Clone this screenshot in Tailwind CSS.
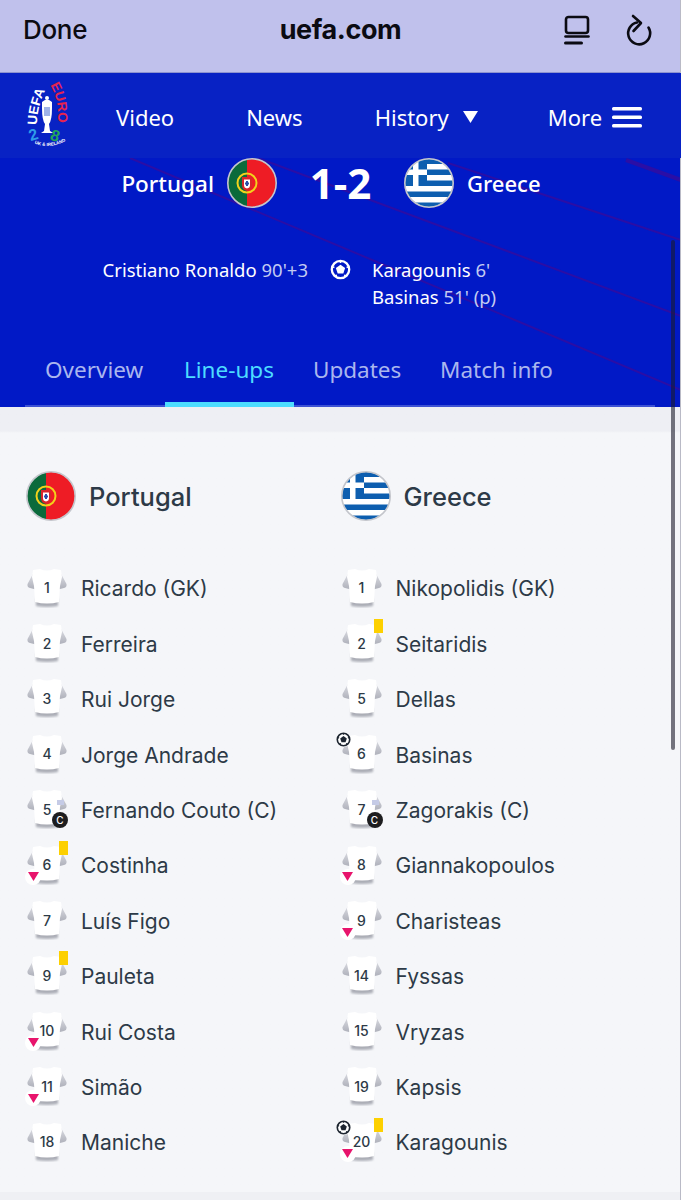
<!DOCTYPE html>
<html lang="en">

<head>
    <meta charset="UTF-8">
    <meta name="viewport" content="width=device-width, initial-scale=1.0">
    <title>Portugal 1-2 Greece - Line-ups</title>
    <script src="https://cdn.jsdelivr.net/npm/@tailwindcss/browser@4"></script>
</head>

<body class="bg-[#f5f6f9] font-['Noto_Sans',sans-serif]">
    <svg class="absolute w-0 h-0">
        <defs>
            <filter id="soft" x="-30%" y="-30%" width="160%" height="160%"><feGaussianBlur stdDeviation="1.200"/></filter>
            <linearGradient id="sleeve" x1="0" y1="0" x2="0" y2="1">
                <stop offset="0" stop-color="#e6e7ec"/>
                <stop offset="1" stop-color="#aeb0ba"/>
            </linearGradient>
            <symbol id="shirt" viewBox="0 0 40 40">
                <path d="M9 30 H31 L31 38 Q20 40 9 38 Z" fill="#9a9ca6" opacity="0.8" filter="url(#soft)"/>
                <path d="M8 2 L0.500 16 Q0 19.500 3 20 L9 21.500 Z" fill="url(#sleeve)"/>
                <path d="M32 2 L39.500 16 Q40 19.500 37 20 L31 21.500 Z" fill="url(#sleeve)"/>
                <path d="M6 2 L13 1 Q20 4 27 1 L34 2 L35 9 L33 18 L32 34 Q20 37 8 34 L7 18 L5 9 Z" fill="#ffffff"/>
            </symbol>
            <symbol id="ball" viewBox="0 0 20 20">
                <circle cx="10" cy="10" r="8.300" fill="none" stroke="currentColor" stroke-width="2.200"/>
                <path d="M10 5.400 L14.400 8.600 L12.700 13.700 L7.300 13.700 L5.600 8.600 Z" fill="currentColor"/>
                <path d="M10 2 V3.800 M17.500 7.500 L15.800 8.100 M14.800 16.400 L13.700 15 M5.200 16.400 L6.300 15 M2.500 7.500 L4.200 8.100" stroke="currentColor" stroke-width="1.500"/>
            </symbol>
            <symbol id="pt" viewBox="0 0 50 50">
                <clipPath id="ptclip"><circle cx="25" cy="25" r="24"/></clipPath>
                <g clip-path="url(#ptclip)">
                    <rect width="20" height="50" fill="#0b6a3b"/>
                    <rect x="20" width="30" height="50" fill="#ee1c25"/>
                </g>
                <circle cx="20" cy="25" r="9.500" fill="none" stroke="#f2d21b" stroke-width="2"/>
                <path d="M15 19 H25 V27 Q25 32 20 33 Q15 32 15 27 Z" fill="#d9262b"/>
                <path d="M17 21.500 H23 V27 Q23 30 20 30.500 Q17 30 17 27 Z" fill="#ffffff"/>
                <rect x="19" y="23" width="2" height="5" fill="#2a4fa8"/>
                <rect x="18" y="24.500" width="4" height="2" fill="#2a4fa8"/>
                <circle cx="25" cy="25" r="24.200" fill="none" stroke="#c4c6cc" stroke-width="1.600"/>
            </symbol>
            <symbol id="gr" viewBox="0 0 50 50">
                <clipPath id="grclip"><circle cx="25" cy="25" r="24"/></clipPath>
                <g clip-path="url(#grclip)">
                    <rect width="50" height="50" fill="#ffffff"/>
                    <rect x="0" y="0.500" width="50" height="5.500" fill="#0d5eaf"/>
                    <rect x="0" y="11.500" width="50" height="5.500" fill="#0d5eaf"/>
                    <rect x="0" y="22.500" width="50" height="5.500" fill="#0d5eaf"/>
                    <rect x="0" y="33.500" width="50" height="5.500" fill="#0d5eaf"/>
                    <rect x="0" y="44.500" width="50" height="5.500" fill="#0d5eaf"/>
                    <rect x="0" y="0" width="23" height="28" fill="#0d5eaf"/>
                    <rect x="9" y="0" width="5.500" height="28" fill="#ffffff"/>
                    <rect x="0" y="11.500" width="23" height="5.500" fill="#ffffff"/>
                </g>
                <circle cx="25" cy="25" r="24.200" fill="none" stroke="#c4c6cc" stroke-width="1.600"/>
            </symbol>
        </defs>
    </svg>

    <div class="relative w-[681px] h-[1200px] overflow-hidden">
        <!-- browser bar -->
        <header class="relative h-[73px] bg-[#c0c1ec] border-b border-[#8d93cf] text-[#0b0b12]">
            <div class="flex items-center h-[58px] pl-[23px] text-[26px] font-['Inter',sans-serif]">
                <span class="font-medium tracking-[-0.3px]">Done</span>
            </div>
            <span class="absolute left-0 right-0 top-[13px] text-center text-[27px] leading-[34px] font-bold tracking-[-0.4px] font-['Inter',sans-serif]">uefa.com</span>
            <svg class="absolute left-[560px] top-[12px]" width="36" height="36" viewBox="0 0 36 36" fill="none" stroke="#0b0b12" stroke-width="2.600" stroke-linecap="round" stroke-linejoin="round">
                <rect x="6" y="5" width="22" height="16" rx="2.500"/>
                <path d="M5.500 24.500 H28.500"/>
                <path d="M5.500 31 H21.500" stroke-width="3"/>
            </svg>
            <svg class="absolute left-[621px] top-[12px]" width="36" height="36" viewBox="0 0 36 36" fill="none" stroke="#0b0b12" stroke-width="2.600" stroke-linecap="round" stroke-linejoin="round">
                <path d="M16 10.500 A11 11 0 1 0 27.500 15.500"/>
                <path d="M12 4 L20 11 L12.500 19"/>
            </svg>
        </header>

        <!-- site nav -->
        <nav class="relative z-10 flex items-center h-[85px] bg-[#0822c4] text-white text-[22px] pt-[3px]">
            <svg class="absolute left-[25px] top-[6px]" width="44" height="72" viewBox="0 0 44 72">
                <path id="arcL" d="M12 46 Q12 26 22 8" fill="none"/>
                <path id="arcR" d="M25 6 Q36 24 32 47" fill="none"/>
                <path id="arcB" d="M4 62 Q22 72 41 62" fill="none"/>
                <text font-family="Liberation Sans" font-weight="700" font-size="13.500" fill="#ffffff"><textPath href="#arcL">UEFA</textPath></text>
                <text font-family="Liberation Sans" font-weight="700" font-size="13.500" fill="#e5244f"><textPath href="#arcR">EURO</textPath></text>
                <text font-family="Liberation Sans" font-size="4.500" font-weight="700" fill="#ffffff"><textPath href="#arcB" startOffset="6">UK &amp; IRELAND</textPath></text>
                <text x="4" y="61" font-family="Liberation Sans" font-weight="700" font-size="16" fill="#2f9be8" transform="rotate(-18 9 56)">2</text>
                <text x="26" y="62" font-family="Liberation Sans" font-weight="700" font-size="16" fill="#22a65a" transform="rotate(18 30 56)">8</text>
                <path d="M17 23 Q22 18 27 23 L27 29 Q27 41 24 45 L25 52 L28 54 H16 L19 52 L20 45 Q17 41 17 29 Z" fill="#ffffff"/>
                <circle cx="22" cy="19" r="2" fill="#ffffff"/>
                <path d="M19 28 H25 V37 H19 Z" fill="#9fb3e8"/>
            </svg>
            <a class="ml-[116px]">Video</a>
            <a class="ml-[72px]">News</a>
            <a class="ml-[72px]">History</a>
            <svg class="ml-[14px]" width="15" height="12" viewBox="0 0 15 12"><path d="M0 0 H15 L7.500 12 Z" fill="#ffffff"/></svg>
            <a class="ml-[70px]">More</a>
            <svg class="ml-[10px]" width="30" height="21" viewBox="0 0 30 21" fill="#ffffff">
                <rect width="30" height="3.500" rx="1.500"/>
                <rect y="8.500" width="30" height="3.500" rx="1.500"/>
                <rect y="17" width="30" height="3.500" rx="1.500"/>
            </svg>
        </nav>

        <!-- match hero -->
        <section class="relative h-[249px] bg-[#0119c6] text-white">
            <svg class="absolute inset-0" width="681" height="249" viewBox="0 0 681 249" fill="none" stroke="#2a0ea6" stroke-width="2">
                <path d="M130 0 L681 232"/>
                <path d="M258 0 L681 158"/>
                <path d="M448 5 L681 82"/>
                <path d="M626 2 L681 22" stroke-width="4"/>
            </svg>

            <div class="relative grid grid-cols-[277px_127px_1fr] items-center">
                <div class="flex items-center justify-end gap-[13px]">
                    <span class="text-[22.500px] font-medium pt-[1px]">Portugal</span>
                    <svg width="50" height="50"><use href="#pt"/></svg>
                </div>
                <div class="text-center text-[42px] leading-[50px] font-bold font-['Open_Sans',sans-serif]">1-2</div>
                <div class="flex items-center gap-[13px]">
                    <svg width="50" height="50"><use href="#gr"/></svg>
                    <span class="text-[22px] font-medium pt-[1px]">Greece</span>
                </div>
            </div>

            <div class="relative grid grid-cols-[308px_64px_1fr] mt-[48px] text-[18.500px] leading-[27px]">
                <div class="text-right">Cristiano Ronaldo <span class="text-[#c3cbf2]">90'+3</span></div>
                <div class="flex justify-center pt-[3px]">
                    <svg width="21" height="21"><use href="#ball"/></svg>
                </div>
                <div>
                    <div>Karagounis <span class="text-[#c3cbf2]">6'</span></div>
                    <div>Basinas <span class="text-[#c3cbf2]">51' (p)</span></div>
                </div>
            </div>

            <div class="absolute left-[25px] w-[630px] bottom-0 flex h-[72px] border-b-2 border-[#3d52d4] text-[22.500px] text-[#aab6ee]">
                <a class="flex items-center w-[140px] pl-[20px] pb-[3px] mb-[-2px]">Overview</a>
                <a class="flex items-center w-[129px] pl-[19px] pt-[3px] mb-[-2px] border-b-[5px] border-[#4ddcff] text-[#4ddcff]">Line-ups</a>
                <a class="flex items-center w-[127px] pl-[19px] pb-[3px] mb-[-2px]">Updates</a>
                <a class="flex items-center pl-[19px] pb-[3px] mb-[-2px]">Match info</a>
            </div>
        </section>

        <!-- line-ups -->
        <main class="h-[785px] bg-gradient-to-b from-[#eeeff4] from-[24px] to-[#f5f6f9] to-[26px] text-[#2d3a47] font-['Inter',sans-serif]">
            <div class="grid grid-cols-2 px-[26px] pt-[64px]">
                <div>
                    <div class="flex items-center h-[50px] gap-[13px] text-[25.500px] font-medium">
                        <svg width="50" height="50"><use href="#pt"/></svg>
                        <span class="pt-[2px]">Portugal</span>
                    </div>
                    <ul class="mt-[39px] text-[21px]">
                        <li class="flex items-center h-[55.4px] gap-[14px]">
                            <div class="relative shrink-0 ml-px w-[40px] h-[40px] flex items-center justify-center text-[14px] font-medium"><svg class="absolute inset-0" width="40" height="40"><use href="#shirt"/></svg><span class="relative">1</span></div>
                            <span class="pt-[3px]">Ricardo (GK)</span>
                        </li>
                        <li class="flex items-center h-[55.4px] gap-[14px]">
                            <div class="relative shrink-0 ml-px w-[40px] h-[40px] flex items-center justify-center text-[14px] font-medium"><svg class="absolute inset-0" width="40" height="40"><use href="#shirt"/></svg><span class="relative">2</span></div>
                            <span class="pt-[3px]">Ferreira</span>
                        </li>
                        <li class="flex items-center h-[55.4px] gap-[14px]">
                            <div class="relative shrink-0 ml-px w-[40px] h-[40px] flex items-center justify-center text-[14px] font-medium"><svg class="absolute inset-0" width="40" height="40"><use href="#shirt"/></svg><span class="relative">3</span></div>
                            <span class="pt-[3px]">Rui Jorge</span>
                        </li>
                        <li class="flex items-center h-[55.4px] gap-[14px]">
                            <div class="relative shrink-0 ml-px w-[40px] h-[40px] flex items-center justify-center text-[14px] font-medium"><svg class="absolute inset-0" width="40" height="40"><use href="#shirt"/></svg><span class="relative">4</span></div>
                            <span class="pt-[3px]">Jorge Andrade</span>
                        </li>
                        <li class="flex items-center h-[55.4px] gap-[14px]">
                            <div class="relative shrink-0 ml-px w-[40px] h-[40px] flex items-center justify-center text-[14px] font-medium"><svg class="absolute inset-0" width="40" height="40"><use href="#shirt"/></svg><span class="relative">5</span>
                                <span class="absolute left-[30px] top-[11px] w-[7px] h-[5px] bg-[#c5cbe6]"></span>
                                <span class="absolute left-[25px] top-[23px] w-[16px] h-[16px] rounded-full bg-[#1d1d1f] text-white text-[10px] leading-[16px] text-center">C</span></div>
                            <span class="pt-[3px]">Fernando Couto (C)</span>
                        </li>
                        <li class="flex items-center h-[55.4px] gap-[14px]">
                            <div class="relative shrink-0 ml-px w-[40px] h-[40px] flex items-center justify-center text-[14px] font-medium"><svg class="absolute inset-0" width="40" height="40"><use href="#shirt"/></svg><span class="relative">6</span>
                                <span class="absolute left-[32px] top-[-4px] w-[9px] h-[14px] bg-[#fdd000]"></span>
                                <span class="absolute left-[-2px] top-[24px] w-[16px] h-[16px] rounded-full bg-white flex items-center justify-center"><svg width="11" height="9" viewBox="0 0 11 9"><path d="M0 0 H11 L5.500 9 Z" fill="#e8146c"/></svg></span></div>
                            <span class="pt-[3px]">Costinha</span>
                        </li>
                        <li class="flex items-center h-[55.4px] gap-[14px]">
                            <div class="relative shrink-0 ml-px w-[40px] h-[40px] flex items-center justify-center text-[14px] font-medium"><svg class="absolute inset-0" width="40" height="40"><use href="#shirt"/></svg><span class="relative">7</span></div>
                            <span class="pt-[3px]">Luís Figo</span>
                        </li>
                        <li class="flex items-center h-[55.4px] gap-[14px]">
                            <div class="relative shrink-0 ml-px w-[40px] h-[40px] flex items-center justify-center text-[14px] font-medium"><svg class="absolute inset-0" width="40" height="40"><use href="#shirt"/></svg><span class="relative">9</span>
                                <span class="absolute left-[32px] top-[-4px] w-[9px] h-[14px] bg-[#fdd000]"></span></div>
                            <span class="pt-[3px]">Pauleta</span>
                        </li>
                        <li class="flex items-center h-[55.4px] gap-[14px]">
                            <div class="relative shrink-0 ml-px w-[40px] h-[40px] flex items-center justify-center text-[14px] font-medium"><svg class="absolute inset-0" width="40" height="40"><use href="#shirt"/></svg><span class="relative">10</span>
                                <span class="absolute left-[-2px] top-[24px] w-[16px] h-[16px] rounded-full bg-white flex items-center justify-center"><svg width="11" height="9" viewBox="0 0 11 9"><path d="M0 0 H11 L5.500 9 Z" fill="#e8146c"/></svg></span></div>
                            <span class="pt-[3px]">Rui Costa</span>
                        </li>
                        <li class="flex items-center h-[55.4px] gap-[14px]">
                            <div class="relative shrink-0 ml-px w-[40px] h-[40px] flex items-center justify-center text-[14px] font-medium"><svg class="absolute inset-0" width="40" height="40"><use href="#shirt"/></svg><span class="relative">11</span>
                                <span class="absolute left-[-2px] top-[24px] w-[16px] h-[16px] rounded-full bg-white flex items-center justify-center"><svg width="11" height="9" viewBox="0 0 11 9"><path d="M0 0 H11 L5.500 9 Z" fill="#e8146c"/></svg></span></div>
                            <span class="pt-[3px]">Simão</span>
                        </li>
                        <li class="flex items-center h-[55.4px] gap-[14px]">
                            <div class="relative shrink-0 ml-px w-[40px] h-[40px] flex items-center justify-center text-[14px] font-medium"><svg class="absolute inset-0" width="40" height="40"><use href="#shirt"/></svg><span class="relative">18</span></div>
                            <span class="pt-[3px]">Maniche</span>
                        </li>
                    </ul>
                </div>

                <div>
                    <div class="flex items-center h-[50px] gap-[13px] text-[25.500px] font-medium">
                        <svg width="50" height="50"><use href="#gr"/></svg>
                        <span class="pt-[2px]">Greece</span>
                    </div>
                    <ul class="mt-[39px] text-[21px]">
                        <li class="flex items-center h-[55.4px] gap-[14px]">
                            <div class="relative shrink-0 ml-px w-[40px] h-[40px] flex items-center justify-center text-[14px] font-medium"><svg class="absolute inset-0" width="40" height="40"><use href="#shirt"/></svg><span class="relative">1</span></div>
                            <span class="pt-[3px]">Nikopolidis (GK)</span>
                        </li>
                        <li class="flex items-center h-[55.4px] gap-[14px]">
                            <div class="relative shrink-0 ml-px w-[40px] h-[40px] flex items-center justify-center text-[14px] font-medium"><svg class="absolute inset-0" width="40" height="40"><use href="#shirt"/></svg><span class="relative">2</span>
                                <span class="absolute left-[32px] top-[-4px] w-[9px] h-[14px] bg-[#fdd000]"></span></div>
                            <span class="pt-[3px]">Seitaridis</span>
                        </li>
                        <li class="flex items-center h-[55.4px] gap-[14px]">
                            <div class="relative shrink-0 ml-px w-[40px] h-[40px] flex items-center justify-center text-[14px] font-medium"><svg class="absolute inset-0" width="40" height="40"><use href="#shirt"/></svg><span class="relative">5</span></div>
                            <span class="pt-[3px]">Dellas</span>
                        </li>
                        <li class="flex items-center h-[55.4px] gap-[14px]">
                            <div class="relative shrink-0 ml-px w-[40px] h-[40px] flex items-center justify-center text-[14px] font-medium"><svg class="absolute inset-0" width="40" height="40"><use href="#shirt"/></svg><span class="relative">6</span>
                                <span class="absolute left-[-6px] top-[-2px] w-[15px] h-[15px] rounded-full bg-white text-[#1d2530]"><svg width="15" height="15"><use href="#ball"/></svg></span></div>
                            <span class="pt-[3px]">Basinas</span>
                        </li>
                        <li class="flex items-center h-[55.4px] gap-[14px]">
                            <div class="relative shrink-0 ml-px w-[40px] h-[40px] flex items-center justify-center text-[14px] font-medium"><svg class="absolute inset-0" width="40" height="40"><use href="#shirt"/></svg><span class="relative">7</span>
                                <span class="absolute left-[30px] top-[11px] w-[7px] h-[5px] bg-[#c5cbe6]"></span>
                                <span class="absolute left-[25px] top-[23px] w-[16px] h-[16px] rounded-full bg-[#1d1d1f] text-white text-[10px] leading-[16px] text-center">C</span></div>
                            <span class="pt-[3px]">Zagorakis (C)</span>
                        </li>
                        <li class="flex items-center h-[55.4px] gap-[14px]">
                            <div class="relative shrink-0 ml-px w-[40px] h-[40px] flex items-center justify-center text-[14px] font-medium"><svg class="absolute inset-0" width="40" height="40"><use href="#shirt"/></svg><span class="relative">8</span>
                                <span class="absolute left-[-2px] top-[24px] w-[16px] h-[16px] rounded-full bg-white flex items-center justify-center"><svg width="11" height="9" viewBox="0 0 11 9"><path d="M0 0 H11 L5.500 9 Z" fill="#e8146c"/></svg></span></div>
                            <span class="pt-[3px]">Giannakopoulos</span>
                        </li>
                        <li class="flex items-center h-[55.4px] gap-[14px]">
                            <div class="relative shrink-0 ml-px w-[40px] h-[40px] flex items-center justify-center text-[14px] font-medium"><svg class="absolute inset-0" width="40" height="40"><use href="#shirt"/></svg><span class="relative">9</span>
                                <span class="absolute left-[-2px] top-[24px] w-[16px] h-[16px] rounded-full bg-white flex items-center justify-center"><svg width="11" height="9" viewBox="0 0 11 9"><path d="M0 0 H11 L5.500 9 Z" fill="#e8146c"/></svg></span></div>
                            <span class="pt-[3px]">Charisteas</span>
                        </li>
                        <li class="flex items-center h-[55.4px] gap-[14px]">
                            <div class="relative shrink-0 ml-px w-[40px] h-[40px] flex items-center justify-center text-[14px] font-medium"><svg class="absolute inset-0" width="40" height="40"><use href="#shirt"/></svg><span class="relative">14</span></div>
                            <span class="pt-[3px]">Fyssas</span>
                        </li>
                        <li class="flex items-center h-[55.4px] gap-[14px]">
                            <div class="relative shrink-0 ml-px w-[40px] h-[40px] flex items-center justify-center text-[14px] font-medium"><svg class="absolute inset-0" width="40" height="40"><use href="#shirt"/></svg><span class="relative">15</span></div>
                            <span class="pt-[3px]">Vryzas</span>
                        </li>
                        <li class="flex items-center h-[55.4px] gap-[14px]">
                            <div class="relative shrink-0 ml-px w-[40px] h-[40px] flex items-center justify-center text-[14px] font-medium"><svg class="absolute inset-0" width="40" height="40"><use href="#shirt"/></svg><span class="relative">19</span></div>
                            <span class="pt-[3px]">Kapsis</span>
                        </li>
                        <li class="flex items-center h-[55.4px] gap-[14px]">
                            <div class="relative shrink-0 ml-px w-[40px] h-[40px] flex items-center justify-center text-[14px] font-medium"><svg class="absolute inset-0" width="40" height="40"><use href="#shirt"/></svg><span class="relative">20</span>
                                <span class="absolute left-[-6px] top-[-2px] w-[15px] h-[15px] rounded-full bg-white text-[#1d2530]"><svg width="15" height="15"><use href="#ball"/></svg></span>
                                <span class="absolute left-[32px] top-[-4px] w-[9px] h-[14px] bg-[#fdd000]"></span>
                                <span class="absolute left-[-2px] top-[24px] w-[16px] h-[16px] rounded-full bg-white flex items-center justify-center"><svg width="11" height="9" viewBox="0 0 11 9"><path d="M0 0 H11 L5.500 9 Z" fill="#e8146c"/></svg></span></div>
                            <span class="pt-[3px]">Karagounis</span>
                        </li>
                    </ul>
                </div>
            </div>
        </main>
        <footer class="h-[8px] bg-[#eff0f4]"></footer>

        <!-- scrollbar and window edge sit over the page -->
        <div class="absolute left-[671px] top-[240px] w-[4px] h-[510px] rounded-full bg-[#1a1a2a]/60"></div>
        <div class="absolute right-0 top-0 bottom-0 w-px bg-[#b9bac6]"></div>
    </div>
</body>

</html>
